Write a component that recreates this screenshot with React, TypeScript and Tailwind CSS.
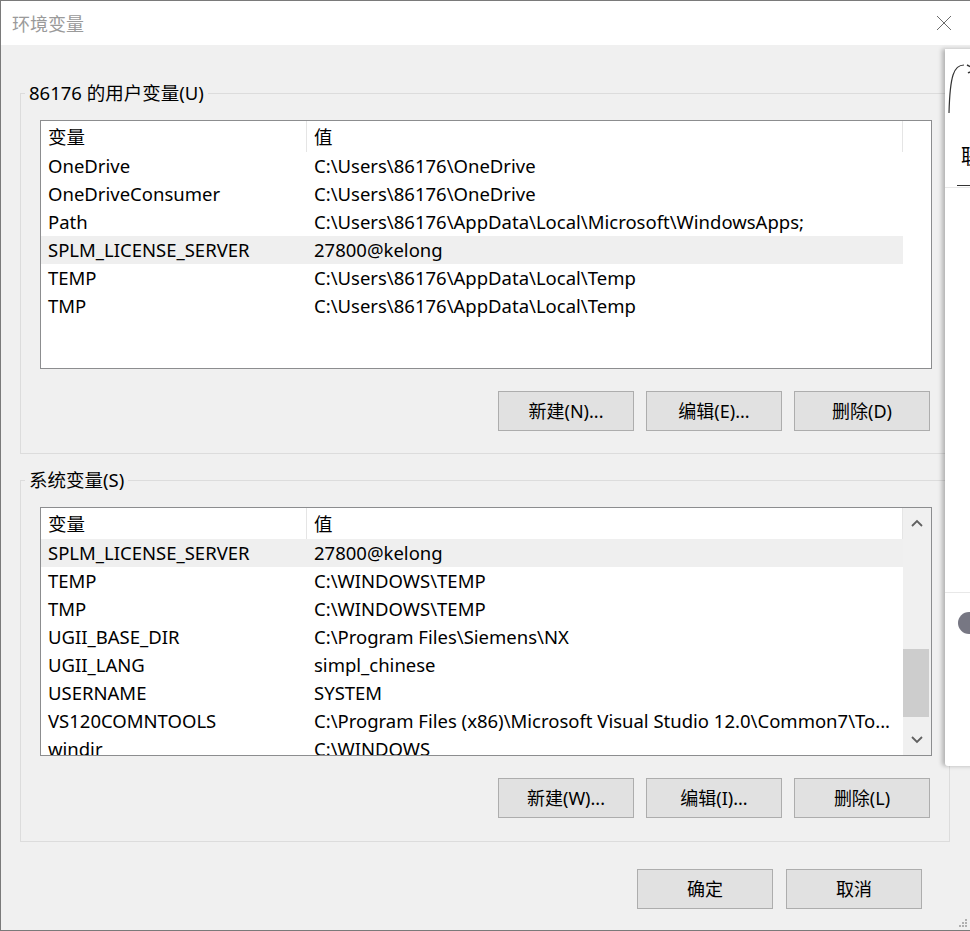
import React from "react";

const userVars: [string, string][] = [
  ["OneDrive", "C:\\Users\\86176\\OneDrive"],
  ["OneDriveConsumer", "C:\\Users\\86176\\OneDrive"],
  ["Path", "C:\\Users\\86176\\AppData\\Local\\Microsoft\\WindowsApps;"],
  ["SPLM_LICENSE_SERVER", "27800@kelong"],
  ["TEMP", "C:\\Users\\86176\\AppData\\Local\\Temp"],
  ["TMP", "C:\\Users\\86176\\AppData\\Local\\Temp"],
];

const sysVars: [string, string][] = [
  ["SPLM_LICENSE_SERVER", "27800@kelong"],
  ["TEMP", "C:\\WINDOWS\\TEMP"],
  ["TMP", "C:\\WINDOWS\\TEMP"],
  ["UGII_BASE_DIR", "C:\\Program Files\\Siemens\\NX"],
  ["UGII_LANG", "simpl_chinese"],
  ["USERNAME", "SYSTEM"],
  ["VS120COMNTOOLS", "C:\\Program Files (x86)\\Microsoft Visual Studio 12.0\\Common7\\To..."],
  ["windir", "C:\\WINDOWS"],
];

const Btn = ({ text, className = "" }: { text: string; className?: string }) => (
  <button className={`w-[136px] h-[40px] bg-[#e1e1e1] border border-[#adadad] text-[18px] text-black flex items-center justify-center ${className}`}>
    {text}
  </button>
);

const VarList = ({ rows, scroll }: { rows: [string, string][]; scroll?: boolean }) => (
  <div className="h-[249px] border border-[#8c8d8f] bg-white overflow-hidden flex">
    <div className="w-[862px] shrink-0">
      <div className="flex h-[31px] items-center">
        <div className="w-[266px] h-full pl-[7px] flex items-center border-r border-[#e5e5e5]">变量</div>
        <div className="flex-1 h-full pl-[7px] flex items-center border-r border-[#e5e5e5]">值</div>
      </div>
      {rows.map(([k, v], i) => (
        <div key={k + i} className={`flex h-[28px] items-center whitespace-nowrap ${i === (scroll ? 0 : 3) ? "bg-[#efefef]" : ""}`}>
          <div className="w-[266px] pl-[7px]">{k}</div>
          <div className="flex-1 pl-[7px]">{v}</div>
        </div>
      ))}
    </div>
    {scroll && (
      <div className="flex-1 bg-[#f0f0f0] flex flex-col items-center justify-between py-[11px]">
        <svg width="12" height="8" viewBox="0 0 12 8"><polyline points="1,7 6,2 11,7" fill="none" stroke="#606060" strokeWidth="1.8" /></svg>
        <div className="flex-1 w-full relative">
          <div className="absolute left-0 right-[2px] top-[122px] h-[68px] bg-[#cdcdcd]" />
        </div>
        <svg width="12" height="8" viewBox="0 0 12 8"><polyline points="1,1 6,6 11,1" fill="none" stroke="#606060" strokeWidth="1.8" /></svg>
      </div>
    )}
  </div>
);

const Group = ({ title, children, className = "" }: { title: string; children: React.ReactNode; className?: string }) => (
  <fieldset className={`border border-[#dcdcdc] ml-[19px] w-[930px] ${className}`}>
    <legend className="ml-[4px] px-[4px] text-[18.5px] leading-[22px]">{title}</legend>
    <div className="pl-[19px] pr-[17px]">{children}</div>
  </fieldset>
);

export default function App() {
  return (
    <div className="relative w-[970px] h-[931px] bg-[#f0f0f0] overflow-hidden font-['Noto_Sans','Noto_Sans_CJK_SC',sans-serif] text-[18.5px] text-black border-t border-l border-b border-[#7a7a7a]">
      <div className="h-[44px] bg-white flex items-center justify-between pl-[11px] pr-[18px]">
        <span className="text-[18px] text-[#9a9a9a] font-['Noto_Sans_CJK_SC',sans-serif]">环境变量</span>
        <svg width="16" height="16" viewBox="0 0 16 16"><path d="M1 1L15 15M15 1L1 15" stroke="#6b6b6b" strokeWidth="1" /></svg>
      </div>

      <Group title="86176 的用户变量(U)" className="mt-[37px] pb-[22px]">
        <div className="mt-[16px]">
          <VarList rows={userVars} />
        </div>
        <div className="flex justify-end gap-[12px] mt-[22px] mr-[2px]">
          <Btn text="新建(N)..." />
          <Btn text="编辑(E)..." />
          <Btn text="删除(D)" />
        </div>
      </Group>

      <Group title="系统变量(S)" className="mt-[15px] pb-[23px]">
        <div className="mt-[16px]">
          <VarList rows={sysVars} scroll />
        </div>
        <div className="flex justify-end gap-[12px] mt-[22px] mr-[2px]">
          <Btn text="新建(W)..." />
          <Btn text="编辑(I)..." />
          <Btn text="删除(L)" />
        </div>
      </Group>

      <div className="flex justify-end gap-[13px] pr-[48px] mt-[27px]">
        <Btn text="确定" />
        <Btn text="取消" />
      </div>

      {/* overlapping window on the right edge */}
      <div className="absolute left-[944px] top-[48px] w-[40px] h-[717px] bg-white shadow-[-3px_0_4px_rgba(0,0,0,0.25)] rounded-bl-[3px]">
        <svg className="absolute left-[1px] top-[12px]" width="26" height="54" viewBox="0 0 26 54">
          <path d="M18 4 C8 4 4 14 3 52" fill="none" stroke="#333" strokeWidth="1.2" />
          <path d="M21 4 l4 2 M22 12 q3 -2 4 2" fill="none" stroke="#333" strokeWidth="1.5" />
        </svg>
        <span className="absolute left-[16px] top-[95px] text-[20px] leading-[24px] font-['Noto_Sans_CJK_SC',sans-serif]">联</span>
        <div className="absolute left-[12px] top-[136px] w-[30px] border-t border-[#333]" />
        <div className="absolute left-0 top-[138px] w-[40px] border-t border-[#e8e8e8]" />
        <div className="absolute left-0 top-[543px] w-[40px] border-t border-[#e8e8e8]" />
        <div className="absolute left-[13px] top-[563px] w-[22px] h-[22px] rounded-full bg-[#777783]" />
      </div>

      <div className="absolute right-[3px] bottom-[3px] grid grid-cols-3 gap-[1px]">
        {[0, 0, 1, 0, 1, 1, 1, 1, 1].map((v, i) => (
          <div key={i} className={`w-[2px] h-[2px] ${v ? "bg-[#b0b0b0]" : ""}`} />
        ))}
      </div>
    </div>
  );
}
